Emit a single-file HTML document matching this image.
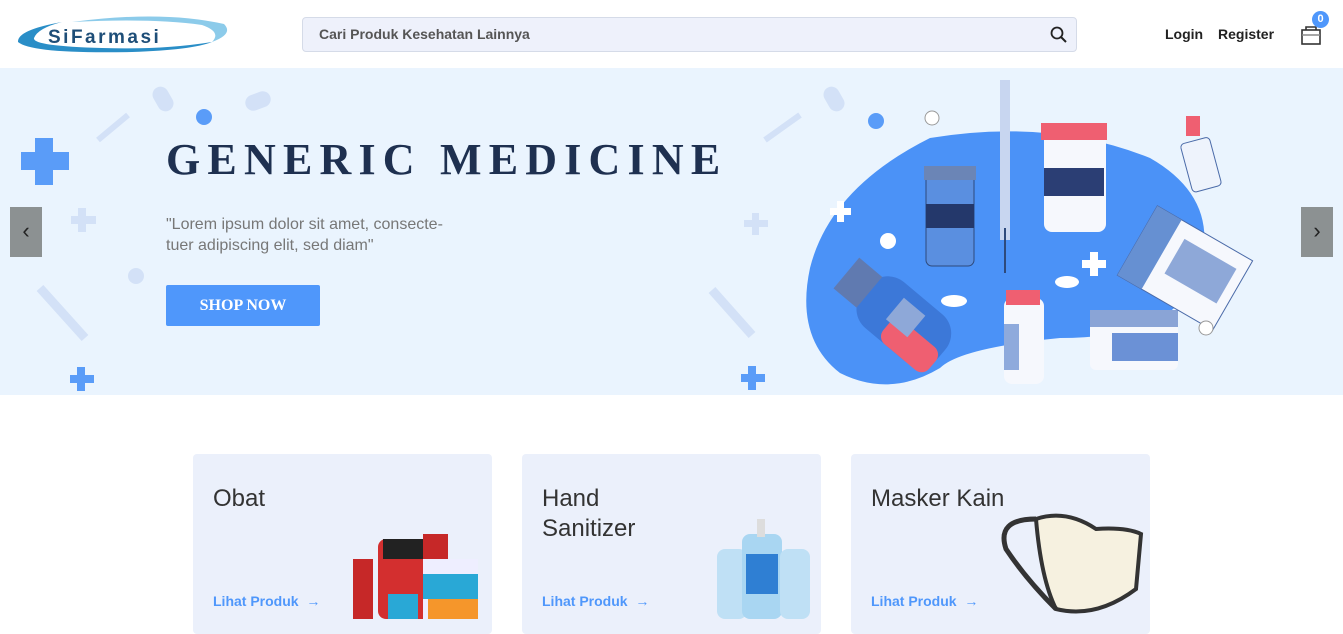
<!DOCTYPE html>
<html><head><meta charset="utf-8"><style>
*{margin:0;padding:0;box-sizing:border-box}
body{width:1343px;height:617px;overflow:hidden;background:#fff;font-family:"Liberation Sans",sans-serif;position:relative}
.abs{position:absolute}
.search{left:302px;top:17px;width:775px;height:35px;background:#eef1fb;border:1px solid #d5dbe8;border-radius:4px;font-size:14px;color:#555;padding:8px 16px;font-weight:bold}
.nav{top:26px;font-size:14px;font-weight:bold;color:#222}
.hero{left:0;top:68px;width:1343px;height:327px;background:#eaf4fe;overflow:hidden}
h1{position:absolute;left:166px;top:66px;font-family:"Liberation Serif",serif;font-size:44px;letter-spacing:7.2px;color:#1e3050;font-weight:bold;white-space:nowrap}
.lorem{left:166px;top:146px;font-size:16px;line-height:21px;color:#777}
.btn{left:166px;top:217px;width:154px;height:41px;background:#4f97fb;color:#fff;font-family:"Liberation Serif",serif;font-weight:bold;font-size:16px;text-align:center;line-height:41px;border-radius:2px}
.arr{top:139px;width:32px;height:50px;background:#8c9192;color:#222;font-size:22px;text-align:center;line-height:48px}
.card{top:454px;width:299px;height:180px;background:#ebf0fb;border-radius:4px;overflow:hidden}
.card .t{position:absolute;left:20px;top:30px;font-size:24px;color:#333;line-height:30px}
.card .l{position:absolute;left:20px;top:139px;font-size:14px;font-weight:bold;color:#4f97fb}
</style></head><body>
<svg class="abs" style="left:12px;top:12px" width="220" height="44" viewBox="0 0 220 44">
<path d="M60 10 Q150 -2 212 12 Q222 22 200 30 Q210 20 190 13 Q140 6 60 10Z" fill="#8ccbea"/>
<path d="M50 10 Q5 18 6 30 Q20 42 120 40 Q180 38 200 30 Q150 38 90 36 Q20 34 22 26 Q26 16 50 10Z" fill="#2a8ec7"/>
<text x="36" y="31" font-family="Liberation Sans" font-weight="bold" font-size="19" fill="#1e4e78" letter-spacing="2.5">SiFarmasi</text>
</svg>
<div class="abs search">Cari Produk Kesehatan Lainnya</div>
<svg class="abs" style="left:1050px;top:26px" width="18" height="18" viewBox="0 0 18 18"><circle cx="7" cy="7" r="5.5" fill="none" stroke="#222" stroke-width="1.8"/><path d="M11 11l5 5" stroke="#222" stroke-width="2"/></svg>
<div class="abs nav" style="left:1165px">Login</div>
<div class="abs nav" style="left:1218px">Register</div>
<svg class="abs" style="left:1300px;top:22px" width="24" height="24" viewBox="0 0 24 24"><path d="M6 8V5h10v3" fill="none" stroke="#333" stroke-width="1.6"/><rect x="2" y="8" width="18" height="14" fill="none" stroke="#333" stroke-width="1.6"/><path d="M2 13h18" stroke="#888" stroke-width="1.4"/></svg>
<div class="abs" style="left:1312px;top:11px;width:17px;height:17px;border-radius:50%;background:#4f97fb;color:#fff;font-size:11px;font-weight:bold;text-align:center;line-height:17px">0</div>
<div class="abs hero">
<svg class="abs" style="left:0;top:0" width="1343" height="327">
<g fill="#5a9cf8"><path d="M35 70h18v14h16v18h-16v15h-18v-15h-14v-18h14z"/><path d="M77 299h8v8h9v8h-9v8h-8v-8h-7v-8h7z"/><path d="M748 298h8v8h9v8h-9v8h-8v-8h-7v-8h7z"/><circle cx="204" cy="49" r="8"/><circle cx="876" cy="53" r="8"/></g>
<g fill="#d3e1f7"><path d="M78 140h8v8h10v8h-10v8h-8v-8h-7v-8h7z"/><path d="M752 145h7v7h9v7h-9v8h-7v-8h-8v-7h8z"/><rect x="155" y="18" width="16" height="26" rx="8" transform="rotate(-30 163 31)"/><rect x="245" y="25" width="26" height="16" rx="8" transform="rotate(-20 258 33)"/><rect x="826" y="18" width="16" height="26" rx="8" transform="rotate(-30 834 31)"/><circle cx="136" cy="208" r="8"/><path d="M40 220l45 50" stroke="#d3e1f7" stroke-width="9"/><path d="M712 222l40 45" stroke="#d3e1f7" stroke-width="9"/><path d="M98 72l30-25" stroke="#d3e1f7" stroke-width="6"/><path d="M765 72l35-25" stroke="#d3e1f7" stroke-width="6"/></g>
<path d="M930 70 Q1050 50 1150 90 Q1220 130 1200 200 Q1180 270 1060 270 Q960 280 940 300 Q890 330 840 305 Q795 270 810 200 Q830 120 930 70Z" fill="#4b92f7"/>
<rect x="926" y="100" width="48" height="98" rx="6" fill="#5a8fe0" stroke="#2e4a7c"/><rect x="926" y="136" width="48" height="24" fill="#24386b"/><rect x="924" y="98" width="52" height="14" fill="#6b85b6"/>
<rect x="1044" y="64" width="62" height="100" rx="8" fill="#f6f8fd"/><rect x="1041" y="55" width="66" height="17" fill="#ef5f71"/><rect x="1044" y="100" width="60" height="28" fill="#2b3e74"/>
<rect x="1004" y="230" width="40" height="86" rx="8" fill="#f6f8fd"/><rect x="1006" y="222" width="34" height="15" fill="#ef5f71"/><rect x="1004" y="256" width="15" height="46" fill="#8eaadc"/>
<rect x="1090" y="242" width="88" height="60" rx="6" fill="#f6f8fd"/><rect x="1090" y="242" width="88" height="17" fill="#8aa4d6"/><rect x="1112" y="265" width="66" height="28" fill="#6b91d6"/>
<g transform="rotate(30 1185 200)"><rect x="1130" y="160" width="110" height="80" fill="#f6f8fd" stroke="#4a6aa8"/><rect x="1130" y="160" width="28" height="80" fill="#6690d2"/><rect x="1170" y="175" width="60" height="40" fill="#8ea8d8"/></g>
<g transform="rotate(40 900 250)"><rect x="855" y="220" width="100" height="60" rx="25" fill="#3c78d8"/><rect x="895" y="250" width="60" height="30" rx="10" fill="#ef5f71"/><rect x="830" y="230" width="30" height="40" fill="#607ab0"/><rect x="890" y="232" width="28" height="28" fill="#8ea8d8"/></g>
<rect x="1000" y="12" width="10" height="160" fill="#c8d6f0"/><path d="M1005 160v45" stroke="#2e4a7c" stroke-width="2"/>
<rect x="1186" y="48" width="14" height="20" fill="#ef5f71"/><rect x="1186" y="72" width="30" height="50" rx="4" fill="#eef3fc" stroke="#4a6aa8" transform="rotate(-15 1200 97)"/>
<g fill="#fff"><path d="M1090 184h8v8h8v8h-8v8h-8v-8h-8v-8h8z"/><path d="M837 133h7v7h7v7h-7v7h-7v-7h-7v-7h7z"/><circle cx="888" cy="173" r="8"/><ellipse cx="954" cy="233" rx="13" ry="6"/><ellipse cx="1067" cy="214" rx="12" ry="6"/><circle cx="932" cy="50" r="7" stroke="#999"/><circle cx="1206" cy="260" r="7" stroke="#999"/></g>
</svg>
<h1>GENERIC MEDICINE</h1>
<div class="abs lorem">"Lorem ipsum dolor sit amet, consecte-<br>tuer adipiscing elit, sed diam"</div>
<div class="abs btn">SHOP NOW</div>
<div class="abs arr" style="left:10px">&#8249;</div>
<div class="abs arr" style="left:1301px">&#8250;</div>
</div>
<div class="abs card" style="left:193px"><div class="t">Obat</div><div class="l">Lihat Produk &nbsp;→</div>
<svg class="abs" style="left:160px;top:75px" width="139" height="90"><rect x="0" y="30" width="20" height="60" fill="#c62828"/><rect x="25" y="10" width="65" height="80" rx="8" fill="#d32f2f"/><rect x="30" y="10" width="55" height="20" fill="#222"/><rect x="70" y="5" width="25" height="25" fill="#c62828"/><rect x="70" y="30" width="55" height="60" fill="#eef"/><rect x="70" y="45" width="55" height="25" fill="#29a8d6"/><rect x="75" y="70" width="50" height="20" fill="#f5962b"/><rect x="35" y="65" width="30" height="25" fill="#29a8d6"/></svg></div>
<div class="abs card" style="left:522px"><div class="t">Hand<br>Sanitizer</div><div class="l">Lihat Produk &nbsp;→</div>
<svg class="abs" style="left:190px;top:65px" width="109" height="100"><rect x="5" y="30" width="30" height="70" rx="8" fill="#bfe0f5"/><rect x="30" y="15" width="40" height="85" rx="8" fill="#a9d6f2"/><rect x="68" y="30" width="30" height="70" rx="8" fill="#bfe0f5"/><rect x="34" y="35" width="32" height="40" fill="#2f7fd3"/><rect x="45" y="0" width="8" height="18" fill="#ddd"/></svg></div>
<div class="abs card" style="left:851px"><div class="t">Masker Kain</div><div class="l">Lihat Produk &nbsp;→</div>
<svg class="abs" style="left:145px;top:55px" width="154" height="110"><path d="M40 10 Q70 0 100 20 Q130 18 145 25 L140 80 Q100 110 60 100 Q45 70 40 10Z" fill="#f6f1e0" stroke="#333" stroke-width="4"/><path d="M40 10 Q0 10 10 40 Q30 70 60 100" fill="none" stroke="#333" stroke-width="5"/></svg></div>
</body></html>
